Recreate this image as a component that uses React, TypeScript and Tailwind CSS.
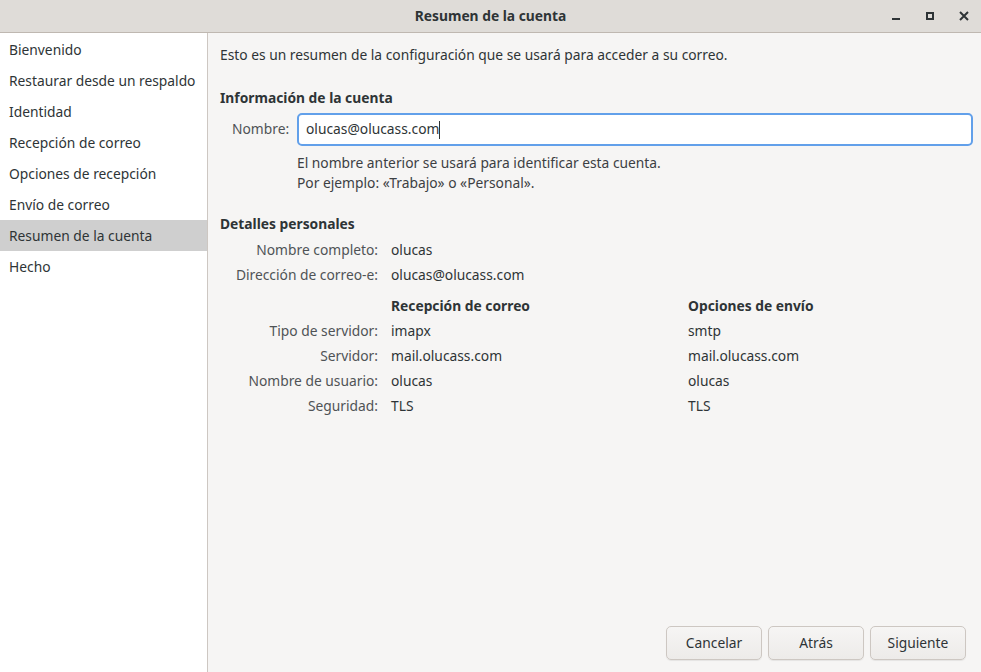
import React from "react";

const items = [
  "Bienvenido",
  "Restaurar desde un respaldo",
  "Identidad",
  "Recepción de correo",
  "Opciones de recepción",
  "Envío de correo",
  "Resumen de la cuenta",
  "Hecho",
];

function Row({ label, v1, v2 }: { label: string; v1: string; v2?: string }) {
  return (
    <>
      <div className="text-right text-[#4f5356] h-[25px] leading-[25px] whitespace-nowrap">{label}</div>
      <div className="h-[25px] leading-[25px]">{v1}</div>
      <div className="h-[25px] leading-[25px]">{v2 ?? ""}</div>
    </>
  );
}

export default function App() {
  return (
    <div
      className="w-[981px] h-[672px] flex flex-col bg-[#f6f5f4] text-[#2e3436] text-[13.8px] overflow-hidden"
      style={{ fontFamily: '"Noto Sans", sans-serif' }}
    >
      <div className="h-[33px] shrink-0 bg-[#dfdcd8] border-b border-[#bfb8b1] flex items-center relative">
        <div className="flex-1 text-center font-bold text-[#2e3436]">Resumen de la cuenta</div>
        <div className="absolute right-0 top-0 h-[32px] flex items-center">
          <div className="w-[34px] flex justify-center">
            <div className="w-[8px] h-[2px] bg-[#2e3436] mt-[6px]" />
          </div>
          <div className="w-[34px] flex justify-center">
            <div className="w-[8px] h-[8px] border-2 border-[#2e3436]" />
          </div>
          <div className="w-[34px] flex justify-center">
            <svg width="10" height="10" viewBox="0 0 10 10">
              <path d="M1 1L9 9M9 1L1 9" stroke="#2e3436" strokeWidth="2" />
            </svg>
          </div>
        </div>
      </div>
      <div className="flex flex-1 min-h-0">
        <div className="w-[208px] shrink-0 bg-white border-r border-[#cdc7c2] flex flex-col pt-[1px]">
          {items.map((it, i) => (
            <div
              key={it}
              className={`h-[31px] leading-[31px] pl-[9px] ${i === 6 ? "bg-[#cfcfcf]" : ""}`}
            >
              {it}
            </div>
          ))}
        </div>
        <div className="flex-1 flex flex-col pl-[12px] pr-[8px] pt-[11px] pb-[12px]">
          <div className="h-[22px] leading-[22px]">
            Esto es un resumen de la configuración que se usará para acceder a su correo.
          </div>
          <div className="mt-[21px] font-bold h-[22px] leading-[22px]">Información de la cuenta</div>
          <div className="flex items-center ml-[12px] mt-[4px]">
            <div className="w-[57px] text-right text-[#4f5356] whitespace-nowrap">Nombre:</div>
            <div className="ml-[8px] flex-1 h-[33px] bg-white border-2 border-[#62a0ea] rounded-[5px] flex items-center px-[7px]">
              <span>olucas@olucass.com</span>
              <span className="w-[1px] h-[18px] bg-[#2e3436]" />
            </div>
          </div>
          <div className="ml-[77px] mt-[7px] leading-[20px] text-[#3c4043]">
            <div>El nombre anterior se usará para identificar esta cuenta.</div>
            <div>Por ejemplo: «Trabajo» o «Personal».</div>
          </div>
          <div className="mt-[20px] font-bold h-[22px] leading-[22px]">Detalles personales</div>
          <div className="ml-[12px] mt-[2px] grid grid-cols-[146px_284px_1fr] gap-x-[13px]">
            <Row label="Nombre completo:" v1="olucas" />
            <Row label="Dirección de correo-e:" v1="olucas@olucass.com" />
            <div className="h-[31px]" />
            <div className="h-[31px] leading-[25px] pt-[6px] font-bold">Recepción de correo</div>
            <div className="h-[31px] leading-[25px] pt-[6px] font-bold">Opciones de envío</div>
            <Row label="Tipo de servidor:" v1="imapx" v2="smtp" />
            <Row label="Servidor:" v1="mail.olucass.com" v2="mail.olucass.com" />
            <Row label="Nombre de usuario:" v1="olucas" v2="olucas" />
            <Row label="Seguridad:" v1="TLS" v2="TLS" />
          </div>
          <div className="mt-auto flex justify-end gap-[6px] pr-[7px]">
            {["Cancelar", "Atrás", "Siguiente"].map((b) => (
              <button
                key={b}
                className="w-[96px] h-[34px] rounded-[5px] border border-[#cdc7c2] bg-gradient-to-b from-[#f6f5f4] to-[#edebe9] shadow-[0_1px_1px_rgba(0,0,0,0.07)] text-[#2e3436]"
              >
                {b}
              </button>
            ))}
          </div>
        </div>
      </div>
    </div>
  );
}
